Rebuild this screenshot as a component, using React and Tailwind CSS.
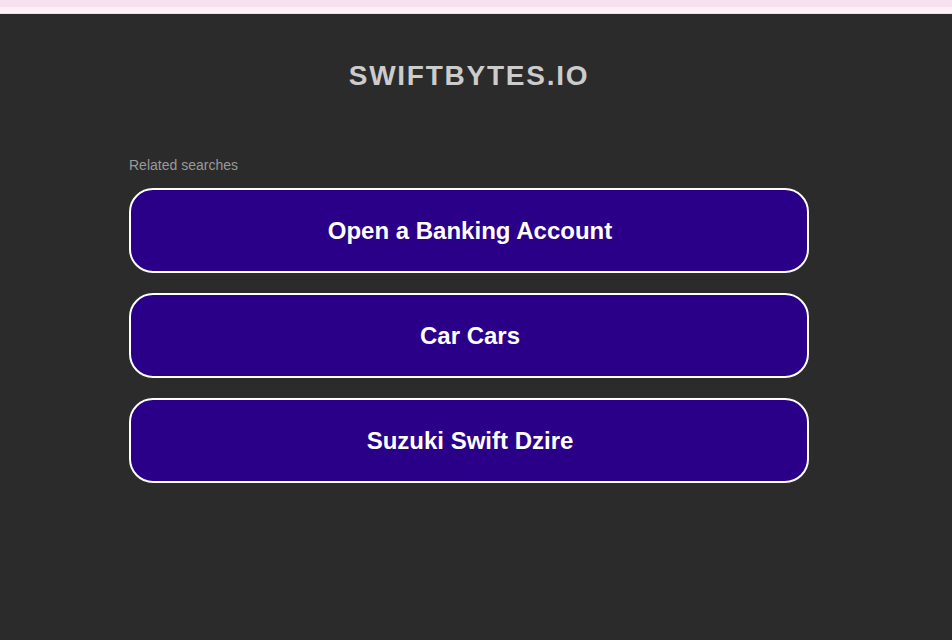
export default function App() {
  const items = ["Open a Banking Account", "Car Cars", "Suzuki Swift Dzire"];
  return (
    <div className="min-h-[640px] bg-[#2b2b2b]" style={{ fontFamily: '"Liberation Sans", Arial, sans-serif' }}>
      <div className="h-[7px] bg-[#f5e1ef]" />
      <div className="h-[6px] bg-[#fff0f6]" />
      <div className="h-[1px] bg-[#f3dde9]" />
      <div className="w-[938px]">
        <div className="pt-[46px] text-center text-[28px] font-bold leading-[32px] tracking-[1.75px] text-[#cccccc]">
          SWIFTBYTES.IO
        </div>
        <div className="mx-auto mt-[65px] w-[680px]">
          <div className="text-[14px] leading-[16px] text-[#9a9a9a]">Related searches</div>
          <div className="mt-[15px] flex flex-col gap-[20px]">
            {items.map((t) => (
              <div
                key={t}
                className="flex h-[85px] items-center justify-center rounded-[24px] border-2 border-white bg-[#2a0088] pl-[2px] pt-[1px] text-[24px] font-bold text-white"
              >
                {t}
              </div>
            ))}
          </div>
        </div>
      </div>
    </div>
  );
}
